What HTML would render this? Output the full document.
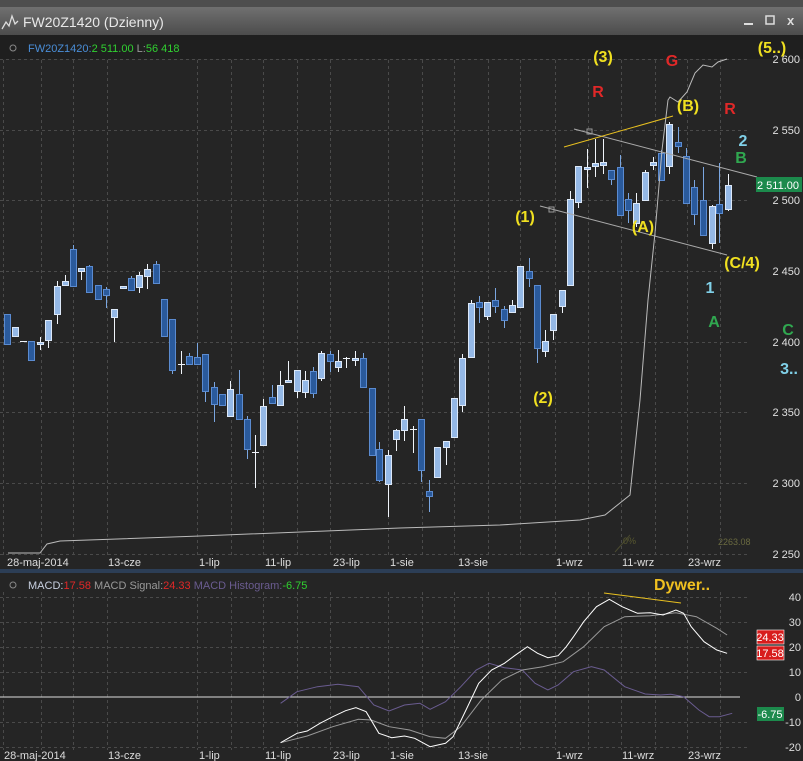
<!DOCTYPE html>
<html><head><meta charset="utf-8"><style>
html,body{margin:0;padding:0;background:#252525;width:803px;height:761px;overflow:hidden;font-family:"Liberation Sans",sans-serif}
svg{display:block}
</style></head><body>
<svg id="s" width="803" height="761" xmlns="http://www.w3.org/2000/svg" font-family="Liberation Sans, sans-serif">
<rect width="803" height="761" fill="#252525"/>
<rect width="803" height="7" fill="#4e4e4e"/>
<defs><linearGradient id="tb" x1="0" y1="0" x2="0" y2="1"><stop offset="0" stop-color="#707070"/><stop offset="1" stop-color="#4c4c4c"/></linearGradient></defs>
<rect y="7" width="803" height="28" fill="url(#tb)"/>
<rect y="35" width="803" height="24" fill="#1f1f1f"/>
<path d="M2 29 L6 22 L9 26 L12 16 L15 24 L18 21" stroke="#ddd" fill="none" stroke-width="1.3"/>
<text x="23" y="27" font-size="14" fill="#e8e8e8">FW20Z1420 (Dzienny)</text>
<g fill="#ddd"><rect x="744" y="23" width="9" height="2"/><rect x="766" y="16" width="8" height="8" fill="none" stroke="#ddd" stroke-width="1.5"/></g>
<text x="787" y="25" font-size="13" fill="#ddd" font-weight="bold">x</text>
<g fill="#888"><circle cx="13" cy="48" r="3" fill="none" stroke="#888"/></g>
<text x="28" y="52" font-size="11"><tspan fill="#4a8ed8">FW20Z1420:</tspan><tspan fill="#30d030">2 511.00 </tspan><tspan fill="#999">L:</tspan><tspan fill="#30d030">56 418</tspan></text>
<g id="grid" stroke="#4a4a4a" stroke-dasharray="3,3" stroke-width="1"></g>
<g id="cand"></g>
<line x1="574" y1="129" x2="757" y2="177" stroke="#aaa" stroke-width="1"/>
<line x1="540" y1="206" x2="727" y2="255" stroke="#aaa" stroke-width="1"/>
<rect x="587" y="129" width="5" height="5" fill="none" stroke="#999"/>
<rect x="549" y="207" width="5" height="5" fill="none" stroke="#999"/>
<line x1="564" y1="147" x2="673" y2="116" stroke="#e8c020" stroke-width="1"/>
<polyline fill="none" stroke="#bbb" stroke-width="1" points="8,553 40,553 47,544 60,541 200,536 400,528 500,525 580,520 605,515 630,495 640,400 648,300 655,233 662,150 668,100 670,97 678,102 687,92 695,73 703,65 712,67 718,62 727,59"/>
<line x1="615" y1="552" x2="630" y2="535" stroke="#4a4a30"/>
<text x="623" y="544" font-size="9" fill="#5a5a30">0%</text>
<text x="718" y="545" font-size="9" fill="#6a6a40">2263.08</text>
<g font-size="11" fill="#e0e0e0" text-anchor="end">
<text x="800" y="63">2 600</text><text x="800" y="134">2 550</text><text x="800" y="204">2 500</text><text x="800" y="275">2 450</text><text x="800" y="346">2 400</text><text x="800" y="416">2 350</text><text x="800" y="487">2 300</text><text x="800" y="558">2 250</text>
</g>
<rect x="756" y="177" width="46" height="15" fill="#1c8a4c"/>
<text x="799" y="189" font-size="11" fill="#fff" text-anchor="end">2 511.00</text>
<g font-size="11" fill="#ddd">
<text x="7" y="566">28-maj-2014</text><text x="108" y="566">13-cze</text><text x="199" y="566">1-lip</text><text x="265" y="566">11-lip</text><text x="333" y="566">23-lip</text><text x="390" y="566">1-sie</text><text x="458" y="566">13-sie</text><text x="556" y="566">1-wrz</text><text x="622" y="566">11-wrz</text><text x="688" y="566">23-wrz</text>
</g>
<g font-size="16" font-weight="bold" text-anchor="middle">
<text x="603" y="62" fill="#f0e020">(3)</text>
<text x="672" y="66" fill="#e02828">G</text>
<text x="772" y="53" fill="#f0e020">(5..)</text>
<text x="598" y="97" fill="#e02828">R</text>
<text x="688" y="111" fill="#f0e020">(B)</text>
<text x="730" y="114" fill="#e02828">R</text>
<text x="743" y="146" fill="#80d0e8">2</text>
<text x="741" y="163" fill="#30a850">B</text>
<text x="525" y="222" fill="#f0e020">(1)</text>
<text x="643" y="232" fill="#f0e020">(A)</text>
<text x="742" y="268" fill="#f0e020">(C/4)</text>
<text x="710" y="293" fill="#80d0e8">1</text>
<text x="714" y="327" fill="#30a850">A</text>
<text x="788" y="335" fill="#30a850">C</text>
<text x="789" y="374" fill="#80d0e8">3..</text>
<text x="543" y="403" fill="#f0e020">(2)</text>
</g>
<rect y="569" width="803" height="4" fill="#2c3e56"/>
<g id="grid2" stroke="#4a4a4a" stroke-dasharray="3,3"></g>
<circle cx="13" cy="585" r="3" fill="none" stroke="#888"/>
<text x="28" y="589" font-size="11"><tspan fill="#c8d0e0">MACD:</tspan><tspan fill="#e02828">17.58 </tspan><tspan fill="#999">MACD Signal:</tspan><tspan fill="#e02828">24.33 </tspan><tspan fill="#6a5c90">MACD Histogram:</tspan><tspan fill="#30d030">-6.75</tspan></text>
<text x="682" y="590" font-size="16" font-weight="bold" fill="#f0c020" text-anchor="middle">Dywer..</text>
<line x1="604" y1="593" x2="681" y2="603" stroke="#e8c020"/>
<line x1="0" y1="697" x2="740" y2="697" stroke="#ddd"/>
<polyline fill="none" stroke="#6a5c90" points="280.6,703.3 297,691.7 317.5,686.7 337.9,684.3 358.4,686.7 373.8,705 389.1,711 404.5,705 419.9,703.3 430.1,709.3 445.5,701.7 460.8,686.7 476.2,670 489,663.3 504.4,667.7 522.3,670 535.1,683.3 547.9,690 558.1,685 573.5,671.7 591.4,666.7 604.2,670 624.7,686.7 645.2,694 660.5,695 670.8,694.3 683.6,696.7 698.9,710 709.2,716.7 719.4,716.7 732.2,713.3"/>
<polyline fill="none" stroke="#999" points="280.6,742.7 307.2,736 332.8,726.7 358.4,719.3 371.2,720 389.1,726.7 409.6,730 430.1,736.7 445.5,738.3 460.8,726.7 481.3,700 501.8,680 522.3,670 542.8,666.7 563.2,661.7 583.7,646.7 604.2,626.7 624.7,616.7 650.3,615.7 675.9,612.7 696.4,616.7 716.8,628.3 727.1,635"/>
<polyline fill="none" stroke="#fff" points="280.6,742.7 297,733.3 307.2,731 320,723.3 332.8,716.7 345.6,710.7 355.9,707.7 366.1,711.7 378.9,733.3 391.7,737.7 404.5,736 414.7,738.3 430.1,746.7 445.5,743.3 453.1,736.7 466,710 478.7,683.3 491.6,670 504.4,663.3 514.6,655.7 527.4,646.7 537.6,653.3 547.9,657.7 558.1,655.7 565.8,647.3 573.5,636.7 583.7,621.7 596.5,606.7 609.3,599.3 622.1,606.7 637.5,613.3 650.3,612.7 663.1,615 675.9,610 683.6,613.3 691.2,626.7 704,641.7 716.8,650 727.1,653.3"/>
<g font-size="11" fill="#ddd" text-anchor="end">
<text x="801" y="601">40</text><text x="801" y="626">30</text><text x="801" y="651">20</text><text x="801" y="676">10</text><text x="801" y="701">0</text><text x="801" y="726">-10</text><text x="801" y="751">-20</text>
</g>
<rect x="757" y="630" width="27" height="14" fill="#d81c1c" stroke="#fff" stroke-width="0.6"/><text x="770" y="641" font-size="11" fill="#fff" text-anchor="middle">24.33</text>
<rect x="757" y="646" width="27" height="14" fill="#d81c1c" stroke="#fff" stroke-width="0.6"/><text x="770" y="657" font-size="11" fill="#fff" text-anchor="middle">17.58</text>
<rect x="757" y="707" width="27" height="14" fill="#1c8a4c"/><text x="770" y="718" font-size="11" fill="#fff" text-anchor="middle">-6.75</text>
<g font-size="11" fill="#ddd">
<text x="4" y="759">28-maj-2014</text><text x="108" y="759">13-cze</text><text x="199" y="759">1-lip</text><text x="265" y="759">11-lip</text><text x="333" y="759">23-lip</text><text x="390" y="759">1-sie</text><text x="458" y="759">13-sie</text><text x="556" y="759">1-wrz</text><text x="622" y="759">11-wrz</text><text x="688" y="759">23-wrz</text>
</g>
</svg>
<script>
var NS="http://www.w3.org/2000/svg";
function el(p,t,a){var e=document.createElementNS(NS,t);for(var k in a)e.setAttribute(k,a[k]);p.appendChild(e);return e;}
var g=document.getElementById('grid'),g2=document.getElementById('grid2');
var vx=[3,41,73,107,197,231,263,297,330,388,422,454,488,520,555,588,621,655,687,720];
vx.forEach(function(x){el(g,'line',{x1:x+.5,y1:60,x2:x+.5,y2:556});el(g2,'line',{x1:x+.5,y1:592,x2:x+.5,y2:750});});
[59,130,200,271,342,412,483,554].forEach(function(y){el(g,'line',{x1:0,y1:y+.5,x2:750,y2:y+.5});});
[597,622,647,672,722,747].forEach(function(y){el(g2,'line',{x1:0,y1:y+.5,x2:750,y2:y+.5});});
var C=[[7,0,314,344,314,344],[15,1,327,336,327,336],[23,2,341,341,341,341],[31,0,341,360,341,360],[40,1,342,344,337,350],[48,1,320,340,320,348],[57,1,286,314,281,324],[65,1,281,285,275,285],[73,0,249,286,245,287],[81,1,268,271,268,280],[89,0,266,292,265,292],[98,0,285,299,285,299],[106,0,289,295,287,308],[114,1,309,317,309,342],[123,1,286,288,286,288],[131,0,278,290,276,290],[139,1,275,287,272,293],[147,1,269,276,264,289],[156,0,264,283,261,283],[164,0,299,336,299,336],[172,0,319,370,319,374],[181,2,364,364,351,374],[189,0,356,364,353,364],[197,0,357,364,343,364],[205,0,354,391,354,402],[214,0,387,404,382,422],[222,0,394,405,394,405],[230,1,389,416,381,416],[239,0,394,419,370,419],[247,0,419,449,416,459],[255,2,452,452,435,488],[263,1,406,445,399,445],[272,0,397,403,385,403],[280,1,385,405,371,405],[288,1,380,382,361,382],[297,1,370,391,370,398],[305,1,380,392,371,398],[313,0,371,393,367,398],[321,1,353,378,351,381],[330,0,354,361,351,372],[338,1,361,367,350,372],[346,2,358,358,357,368],[355,1,358,360,351,366],[363,0,358,387,353,387],[372,0,388,455,388,455],[379,0,449,480,442,482],[388,1,455,484,450,517],[396,1,430,439,429,451],[404,1,419,430,406,441],[413,2,429,429,426,453],[421,0,419,470,419,482],[429,0,491,496,480,512],[437,1,447,477,447,477],[446,1,441,447,441,465],[454,1,398,437,398,437],[462,1,358,405,354,412],[471,1,303,357,300,357],[479,0,302,307,296,323],[487,1,302,316,302,320],[495,0,300,306,288,313],[504,0,309,320,306,328],[512,1,305,312,300,312],[520,1,266,307,266,307],[529,0,271,278,258,287],[537,0,285,348,285,363],[545,1,341,351,330,357],[553,1,314,330,314,340],[562,1,290,306,290,313],[570,1,199,285,191,285],[578,1,166,202,166,208],[587,1,167,169,149,188],[595,1,163,166,139,177],[603,1,162,165,139,174],[611,0,170,179,170,185],[620,0,167,215,155,215],[628,0,199,210,193,223],[636,1,203,223,193,227],[645,1,172,200,170,200],[653,1,162,165,157,170],[661,0,153,180,150,180],[669,1,124,166,122,174],[678,0,142,146,127,153],[686,0,156,203,148,203],[694,0,187,214,180,225],[703,0,200,235,167,235],[712,1,206,243,205,249],[719,0,204,213,163,243],[728,1,185,209,174,211]];
var cg=document.getElementById('cand');
C.forEach(function(c){var x=c[0],t=c[1];
var wc=t==0?'#7aa6e0':'#f0f4fa';
el(cg,'line',{x1:x+.5,y1:c[4],x2:x+.5,y2:c[5],stroke:wc,'stroke-width':1});
if(t==2){el(cg,'line',{x1:x-3,y1:c[2]+.5,x2:x+4,y2:c[2]+.5,stroke:'#f0f4fa'});return;}
var h=Math.max(c[3]-c[2],2);
el(cg,'rect',{x:x-2.5,y:c[2]+.5,width:6,height:h,fill:t==0?'#2a5a9c':'#94b8e6',stroke:t==0?'#5b8bd0':'#dce8f8','stroke-width':1});
});
</script>
</body></html>
